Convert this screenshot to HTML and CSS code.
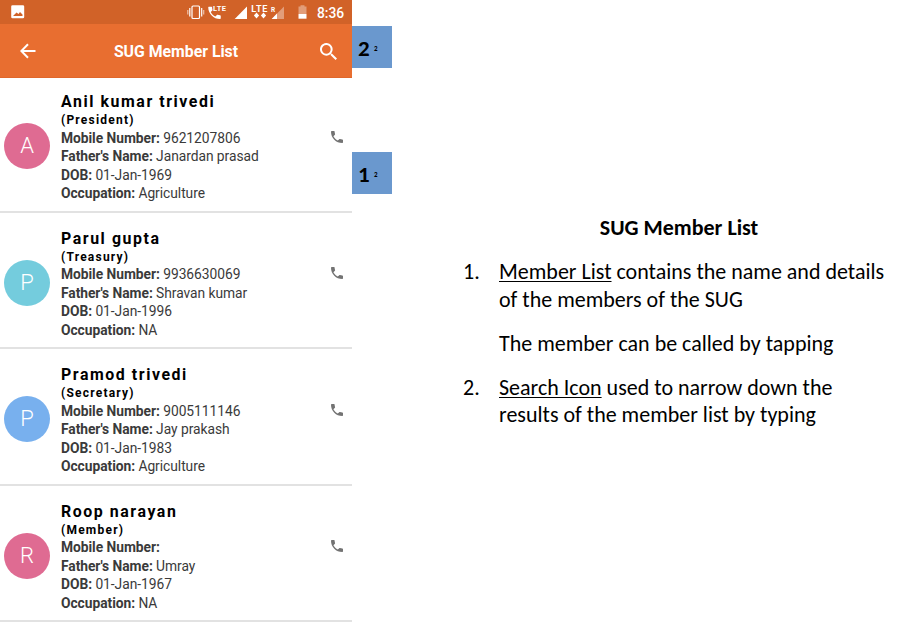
FILE: index.html
```html
<!DOCTYPE html>
<html lang="en">
<head>
<meta charset="utf-8">
<title>SUG Member List</title>
<link rel="stylesheet" href="styles.css">
</head>
<body>
<svg class="defs" aria-hidden="true"><symbol id="phone" viewBox="3 3 18 18"><path d="M6.6 10.8c1.5 2.8 3.8 5.1 6.6 6.6l2.2-2.2c.3-.3.7-.4 1-.2 1.200.4 2.400.6 3.600.6.600 0 1 .4 1 1V20c0 .6-.4 1-1 1C10.600 21 3 13.400 3 4c0-.6.5-1 1-1h3.500c.6 0 1 .4 1 1 0 1.200.2 2.400.6 3.600.1.400 0 .7-.2 1z"/></symbol></svg>
<main class="page">
  <section class="device">
    <div class="status">
      <svg viewBox="0 0 352 24" width="352" height="24">
        <path fill="#fff" fill-rule="evenodd" d="M12.500 5.300h10.400q1.300 0 1.300 1.300v10.300q0 1.300-1.300 1.300H12.500q-1.300 0-1.300-1.300V6.600q0-1.300 1.300-1.300zM13 16h9.500v-1.500l-2.500-2.500-1.500 2-2-1.500z"/>
        <g fill="none" stroke="#fff" stroke-width="1.200"><rect x="192" y="6" width="7.500" height="12.500" rx="1"/><path d="M189.800 8v8.500M201.700 8v8.500"/><path stroke-opacity=".6" d="M187.800 10v4.500M203.700 10v4.500"/></g>
        <use href="#phone" x="208" y="6.500" width="13" height="12.500" fill="#fff"/>
        <text class="st" x="213" y="10.800" font-size="7.500" textLength="13">LTE</text>
        <path fill="#fff" d="M247 6.500V19h-12.300z"/>
        <text class="st" x="251.300" y="12" font-size="9" textLength="16">LTE</text>
        <path fill="#fff" d="M256.500 12.500l2.600 3-2.600 3-2.600-3zM263.500 12.500l2.600 3-2.600 3-2.600-3z"/>
        <text class="st" x="271" y="11.500" font-size="6.500">R</text>
        <path fill="#fff" fill-opacity=".38" d="M284 6.500V19h-12.300z"/><path fill="#fff" d="M277 13.500V19h-5.300z"/>
        <path fill="#fff" fill-opacity=".38" d="M298.500 6.600h2V5.300h4v1.300h2V14h-8z"/><path fill="#fff" d="M298.500 14h8v4.700h-8z"/>
      </svg>
      <span class="clock">8:36</span>
    </div>
    <header class="bar">
      <svg class="back" viewBox="0 0 16 16"><path d="M15.500 8H1.500M8 1.300L1.300 8 8 14.700"/></svg>
      <h1>SUG Member List</h1>
      <svg class="search" viewBox="3 3 17.500 17.500"><path d="M15.500 14h-.79l-.28-.27A6.500 6.500 0 1 0 13.730 14.430l.27.280v.79l5 4.990L20.490 19zM9.500 14a4.500 4.500 0 1 1 0-9 4.500 4.500 0 0 1 0 9z"/></svg>
    </header>
    <div class="list">
      <article class="member"><div class="avatar">A</div><div class="info"><h2>Anil kumar trivedi</h2><h3>(President)</h3><p><b>Mobile Number:</b> 9621207806</p><p><b>Father's Name:</b> Janardan prasad</p><p><b>DOB:</b> 01-Jan-1969</p><p><b>Occupation:</b> Agriculture</p></div><svg class="call"><use href="#phone"/></svg></article>
      <article class="member"><div class="avatar teal">P</div><div class="info"><h2>Parul gupta</h2><h3>(Treasury)</h3><p><b>Mobile Number:</b> 9936630069</p><p><b>Father's Name:</b> Shravan kumar</p><p><b>DOB:</b> 01-Jan-1996</p><p><b>Occupation:</b> NA</p></div><svg class="call"><use href="#phone"/></svg></article>
      <article class="member"><div class="avatar blue">P</div><div class="info"><h2>Pramod trivedi</h2><h3>(Secretary)</h3><p><b>Mobile Number:</b> 9005111146</p><p><b>Father's Name:</b> Jay prakash</p><p><b>DOB:</b> 01-Jan-1983</p><p><b>Occupation:</b> Agriculture</p></div><svg class="call"><use href="#phone"/></svg></article>
      <article class="member"><div class="avatar">R</div><div class="info"><h2>Roop narayan</h2><h3>(Member)</h3><p><b>Mobile Number:</b></p><p><b>Father's Name:</b> Umray</p><p><b>DOB:</b> 01-Jan-1967</p><p><b>Occupation:</b> NA</p></div><svg class="call"><use href="#phone"/></svg></article>
    </div>
  </section>
  <aside class="markers">
    <div class="marker"><b>2</b><small>2</small></div>
    <div class="marker"><b>1</b><small>2</small></div>
  </aside>
  <section class="notes">
    <h2 class="title">SUG Member List</h2>
    <div class="note"><span>1.</span><p><u>Member List</u> contains the name and details<br>of the members of the SUG</p></div>
    <div class="note"><span></span><p>The member can be called by tapping</p></div>
    <div class="note"><span>2.</span><p><u>Search Icon</u> used to narrow down the<br>results of the member list by typing</p></div>
  </section>
</main>
</body>
</html>
```
FILE: styles.css
```css
* { box-sizing: border-box; margin: 0; padding: 0; }
body { width: 904px; height: 624px; overflow: hidden; background: #fff; }
.defs { display: none; }
.page { display: grid; grid-template-columns: 352px 40px 1fr; height: 624px; }
.device { font-family: Roboto, sans-serif; }
.status { height: 24px; background: #d16228; position: relative; }
.status svg { display: block; }
.st { fill: #fff; font-family: Roboto, sans-serif; font-weight: 700; }
.clock { position: absolute; left: 317px; top: 4px; font-size: 13.800px; line-height: 18px; font-weight: 500; color: #fff; }
.bar { height: 54px; background: #e86e30; display: flex; align-items: center; justify-content: space-between; padding: 1px 15px 0 20px; border-bottom: 1px solid #e0672b; color: #fff; }
.bar h1 { font-size: 15.800px; font-weight: 700; line-height: 20px; margin: 1px 4px 0 0; }
.back { width: 16px; height: 16px; fill: none; stroke: #fff; stroke-width: 2; }
.search { width: 17px; height: 17px; fill: #fff; }
.member { height: 136.500px; display: flex; align-items: flex-end; border-bottom: 2px solid #e2e2e2; padding-left: 4px; }
.member:first-child { height: 134.500px; }
.avatar { width: 46px; height: 46px; border-radius: 50%; background: #df6b92; color: #fff; font-size: 22px; font-weight: 300; line-height: 46px; text-align: center; margin-bottom: 41.500px; }
.teal { background: #74ccdd; }
.blue { background: #78b0ee; }
.info { flex: 1; margin-left: 11px; padding-bottom: 8px; color: #3a3a3a; white-space: nowrap; }
.info h2 { font-size: 15.900px; line-height: 20px; letter-spacing: 1.560px; color: #000; }
.info h3 { font-size: 12px; line-height: 16.500px; letter-spacing: 1.220px; color: #000; }
.info p { font-size: 13.800px; line-height: 18.500px; letter-spacing: -.04px; }
.call { width: 12px; height: 12px; margin: 0 9px 68px 0; fill: #737373; }
.markers { padding-top: 26px; display: flex; flex-direction: column; gap: 84px; }
.marker { width: 40px; height: 42px; background: #6a98ce; display: flex; align-items: center; padding-left: 6px; gap: 5px; font-family: Carlito, Lato, sans-serif; }
.marker b { font-size: 23px; width: 11px; line-height: 42px; padding-top: 2px; }
.marker small { font-size: 7px; font-weight: 700; padding-top: 2px; }
.notes { padding: 213.500px 0 0 71px; font-family: Carlito, Lato, sans-serif; font-size: 22px; line-height: 27.500px; color: #000; white-space: nowrap; }
.title { font-size: 22px; line-height: 28px; width: 432px; text-align: center; }
.note { display: grid; grid-template-columns: 36px 1fr; margin-top: 16.500px; }
.note u { text-decoration-thickness: 1px; text-underline-offset: 2px; }
```
